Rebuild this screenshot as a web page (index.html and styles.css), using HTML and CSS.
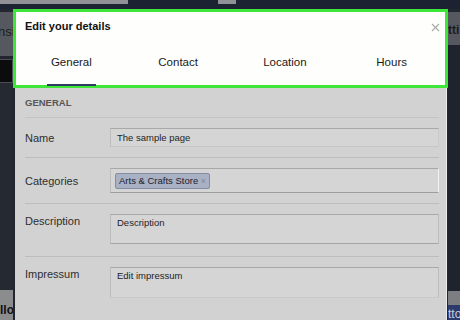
FILE: index.html
```html
<!DOCTYPE html>
<html lang="en">
<head>
    <meta charset="UTF-8">
    <meta name="viewport" content="width=device-width, initial-scale=1.0">
    <title>Edit your details</title>
    <link rel="stylesheet" href="styles.css">
</head>
<body>
    <div class="topbar">
        <span class="topbar-seg seg-a"></span>
        <span class="topbar-seg seg-b"></span>
    </div>

    <aside class="side side-left">
        <div class="side-block">nsig</div>
        <div class="side-box"></div>
        <div class="side-fill"></div>
        <div class="side-foot">llow</div>
    </aside>

    <div class="modal">
        <div class="modal-header">
            <div class="modal-title-row">
                <h1 class="modal-title">Edit your details</h1>
                <svg class="modal-close" width="9" height="9" viewBox="0 0 9 9">
                    <path d="M1 1 L8 8 M8 1 L1 8" stroke="#a9a9a9" stroke-width="1.1" fill="none"/>
                </svg>
            </div>
            <nav class="tabs">
                <div class="tab"><span class="tab-label active">General</span></div>
                <div class="tab"><span class="tab-label">Contact</span></div>
                <div class="tab"><span class="tab-label">Location</span></div>
                <div class="tab"><span class="tab-label">Hours</span></div>
            </nav>
        </div>

        <div class="modal-body">
            <h2 class="section-title">GENERAL</h2>

            <div class="field">
                <label class="field-label">Name</label>
                <div class="field-input input-name">The sample page</div>
            </div>

            <div class="field">
                <label class="field-label">Categories</label>
                <div class="field-input input-tags">
                    <span class="tag">Arts &amp; Crafts Store <span class="tag-x">×</span></span>
                </div>
            </div>

            <div class="field field-top">
                <label class="field-label">Description</label>
                <div class="field-input input-area">Description</div>
            </div>

            <div class="field field-top field-last">
                <label class="field-label">Impressum</label>
                <div class="field-input input-area input-area-lg">Edit impressum</div>
            </div>
        </div>
    </div>

    <aside class="side side-right">
        <div class="side-block">tti</div>
        <div class="side-fill"></div>
        <div class="side-strip"></div>
        <div class="side-foot side-foot-blue">tto</div>
    </aside>
</body>
</html>
```

FILE: styles.css
```css
body {
    margin: 0;
    width: 460px;
    height: 320px;
    overflow: hidden;
    background-color: #22262f;
    font-family: "Liberation Sans", Arial, sans-serif;
    display: grid;
    grid-template-columns: 13px 435px 12px;
    grid-template-rows: 9px 311px;
}

/* backdrop page behind the dialog */
.topbar {
    grid-column: 1 / 4;
    background: #1d2232;
    display: flex;
    align-items: flex-start;
}

.topbar-seg {
    height: 4px;
    background: #8f9196;
}

.seg-a {
    width: 128px;
    margin-right: 90px;
}

.seg-b {
    width: 18px;
}

.side {
    display: flex;
    flex-direction: column;
    overflow: hidden;
}

.side-block {
    height: 44px;
    margin-top: 3px;
    background: #55585f;
    color: #1b1b1d;
    font-size: 13px;
    line-height: 40px;
    white-space: nowrap;
}

.side-left .side-block {
    text-indent: -2px;
}

.side-box {
    height: 22px;
    margin: 3px 0 0;
    background: #0c0c0e;
    border: 1px solid #4a4d55;
    border-left: none;
}

.side-fill {
    flex: 1;
    background: #252932;
}

.side-foot {
    height: 30px;
    background: #8b8c8e;
    color: #111;
    font-size: 12px;
    font-weight: bold;
    line-height: 40px;
    white-space: nowrap;
}

.side-right .side-block {
    margin-top: 3px;
    height: 33px;
    line-height: 36px;
    font-weight: bold;
    font-size: 12px;
}

.side-right .side-fill {
    background: #1f232d;
}

.side-strip {
    height: 14px;
    background: #7d7e82;
}

.side-foot-blue {
    height: 15px;
    background: #2b3a6b;
    color: #c9cfe2;
    font-weight: normal;
    line-height: 18px;
}

/* dialog */
.modal {
    display: flex;
    flex-direction: column;
}

.modal-header {
    box-sizing: border-box;
    height: 79px;
    background: #fefefc;
    border: 3px solid #3fe63a;
    display: flex;
    flex-direction: column;
}

.modal-title-row {
    display: flex;
    justify-content: space-between;
    align-items: center;
    padding: 7px 5px 0 9px;
}

.modal-title {
    margin: 0;
    font-size: 11px;
    line-height: 14px;
    font-weight: bold;
    color: #111;
}

.modal-close {
    margin-top: 2px;
}

.tabs {
    display: grid;
    grid-template-columns: repeat(4, 1fr);
    margin-top: 19px;
    padding-left: 2px;
}

.tab {
    text-align: center;
}

.tab-label {
    display: inline-block;
    font-size: 11.5px;
    line-height: 14px;
    color: #1a1a1a;
    padding: 0 4px 15px;
    border-bottom: 2px solid transparent;
}

.tab-label.active {
    border-bottom-color: #2f3d63;
}

.modal-body {
    flex: 1;
    background: #d2d2d2;
    margin: 0 1px 0 2px;
    padding: 0 7px 0 10px;
    border-right: 1px solid #ececec;
}

.section-title {
    margin: 0;
    padding: 9px 0 8px;
    font-size: 9.5px;
    line-height: 12px;
    font-weight: bold;
    color: #575757;
    border-bottom: 1px solid #c4c4c4;
}

.field {
    display: flex;
    align-items: center;
    padding: 10px 0 10px;
    border-bottom: 1px solid #bdbdbd;
}

.field-top {
    align-items: flex-start;
    padding-bottom: 12px;
}

.field-last {
    border-bottom: none;
}

.field-label {
    width: 85px;
    flex-shrink: 0;
    font-size: 11px;
    line-height: 14px;
    color: #2e2e2e;
}

.field-input {
    flex: 1;
    box-sizing: border-box;
    background: #d5d5d5;
    border: 1px solid #bdbdbd;
    border-top-color: #a8a8a8;
    border-bottom-color: #c6c6c6;
    font-size: 9.5px;
    color: #1e1e1e;
    padding: 0 6px;
}

.input-name {
    height: 19px;
    line-height: 17px;
    border-right-color: #cacaca;
}

.input-tags {
    height: 25px;
    padding: 4px;
    border-bottom-color: #9d9d9d;
    border-right-color: #f2f2f2;
}

.tag {
    display: inline-block;
    box-sizing: border-box;
    height: 16px;
    line-height: 14px;
    padding: 0 3px;
    background: #a9b2c4;
    border: 1px solid #838da4;
    border-radius: 2px;
    color: #1c2130;
}

.tag-x {
    color: #7e8494;
    font-size: 9px;
}

.input-area {
    height: 30px;
    line-height: 14px;
    padding-top: 1px;
    border-bottom-color: #a5a5a5;
}

.input-area-lg {
    height: 31px;
    border-bottom-color: #c9c9c9;
}
```
